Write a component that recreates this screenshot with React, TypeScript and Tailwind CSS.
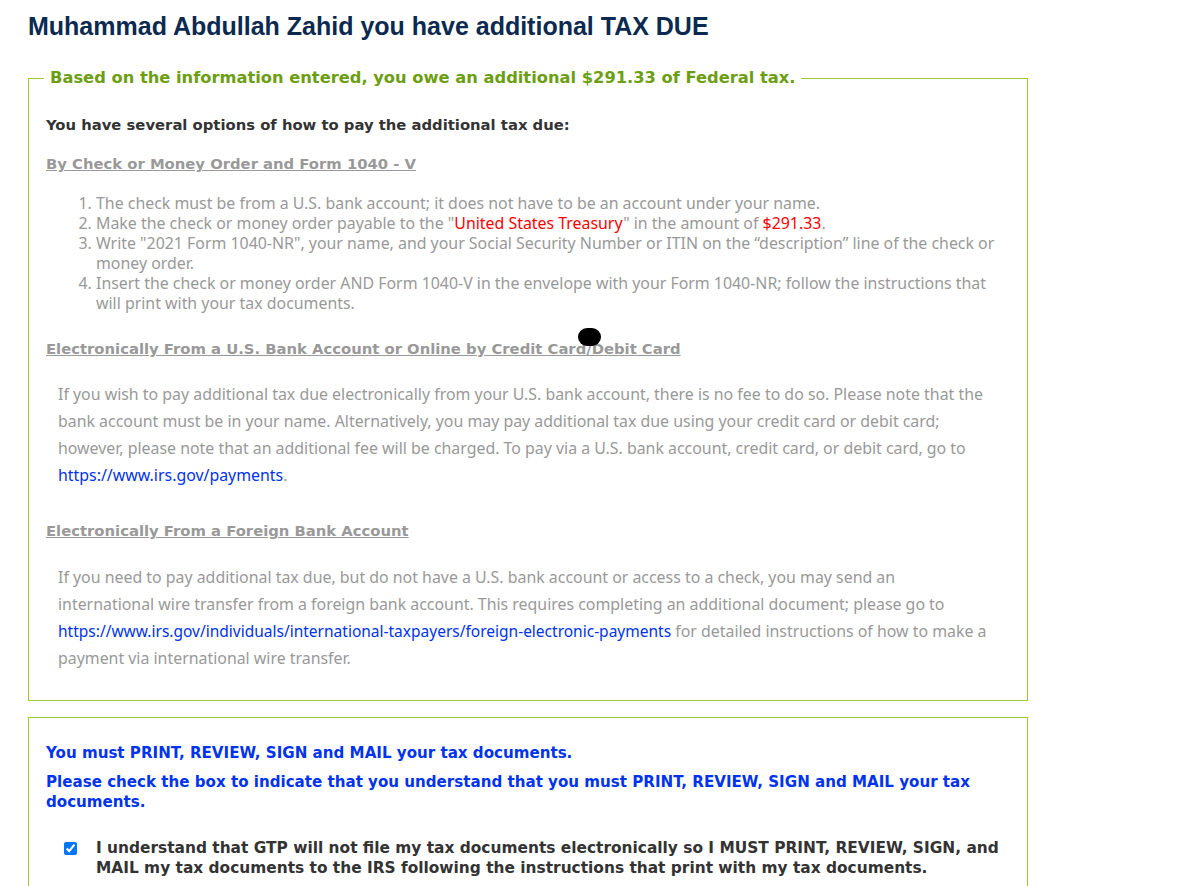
export default function App() {
  return (
    <div className="relative min-h-screen bg-white pl-[28px] pt-[12px] font-['Noto_Sans',sans-serif] text-[15.9px]">
      <h1 className="font-['Liberation_Sans',Arial,sans-serif] text-[25px] font-bold leading-[28px] text-[#0c2a50]">
        Muhammad Abdullah Zahid you have additional TAX DUE
      </h1>

      <fieldset className="mt-[28px] w-[1000px] border border-[#99cc33] px-[17px] pt-[27px] pb-[28px]">
        <legend className="ml-[-2px] px-[6px] font-['DejaVu_Sans',sans-serif] text-[16.3px] font-bold leading-[20px] text-[#6c9e12]">
          Based on the information entered, you owe an additional $291.33 of Federal tax.
        </legend>

        <p className="font-['DejaVu_Sans',sans-serif] text-[14.8px] font-bold leading-[20px] text-[#333333]">
          You have several options of how to pay the additional tax due:
        </p>

        <h3 className="mt-[19px] font-['DejaVu_Sans',sans-serif] text-[14.8px] font-bold leading-[20px] text-[#999999] underline">
          By Check or Money Order and Form 1040 - V
        </h3>
        <ol className="mt-[19px] list-decimal pl-[50px] leading-[20px] text-[#999999]">
          <li>The check must be from a U.S. bank account; it does not have to be an account under your name.</li>
          <li>
            Make the check or money order payable to the "<span className="text-[#ff0000]">United States Treasury</span>" in the amount of{" "}
            <span className="text-[#ff0000]">$291.33</span>.
          </li>
          <li>Write "2021 Form 1040-NR", your name, and your Social Security Number or ITIN on the “description” line of the check or money order.</li>
          <li>Insert the check or money order AND Form 1040-V in the envelope with your Form 1040-NR; follow the instructions that will print with your tax documents.</li>
        </ol>

        <h3 className="mt-[26px] font-['DejaVu_Sans',sans-serif] text-[14.8px] font-bold leading-[20px] text-[#999999] underline">
          Electronically From a U.S. Bank Account or Online by Credit Card/Debit Card
        </h3>
        <p className="mt-[22px] pl-[12px] pr-[21px] leading-[27px] text-[#999999]">
          If you wish to pay additional tax due electronically from your U.S. bank account, there is no fee to do so. Please note that the bank account must be in your name. Alternatively, you may pay additional tax due using your credit card or debit card; however, please note that an additional fee will be charged. To pay via a U.S. bank account, credit card, or debit card, go to{" "}
          <span className="text-[#0033ee]">https://www.irs.gov/payments</span>.
        </p>

        <h3 className="mt-[32px] font-['DejaVu_Sans',sans-serif] text-[14.8px] font-bold leading-[20px] text-[#999999] underline">
          Electronically From a Foreign Bank Account
        </h3>
        <p className="mt-[23px] pl-[12px] pr-[21px] leading-[27px] text-[#999999]">
          If you need to pay additional tax due, but do not have a U.S. bank account or access to a check, you may send an international wire transfer from a foreign bank account. This requires completing an additional document; please go to{" "}
          <span className="text-[15.5px] text-[#0033ee]">https://www.irs.gov/individuals/international-taxpayers/foreign-electronic-payments</span> for detailed instructions of how to make a payment via international wire transfer.
        </p>
      </fieldset>

      <div className="mt-[16px] w-[1000px] border border-[#99cc33] px-[17px] pt-[25px] pb-[20px] font-['DejaVu_Sans',sans-serif]">
        <p className="text-[15.1px] font-bold leading-[20px] text-[#0033ee]">You must PRINT, REVIEW, SIGN and MAIL your tax documents.</p>
        <p className="mt-[9px] text-[15.1px] font-bold leading-[20px] text-[#0033ee]">
          Please check the box to indicate that you understand that you must PRINT, REVIEW, SIGN and MAIL your tax documents.
        </p>
        <label className="mt-[26px] flex items-start pl-[18px]">
          <input type="checkbox" defaultChecked className="mt-[4px] h-[13px] w-[13px] shrink-0" />
          <span className="ml-[19px] text-[15.4px] font-bold leading-[20px] text-[#333333]">
            I understand that GTP will not file my tax documents electronically so I MUST PRINT, REVIEW, SIGN, and MAIL my tax documents to the IRS following the instructions that print with my tax documents.
          </span>
        </label>
      </div>

      {/* mouse cursor dot from the capture */}
      <div className="absolute left-[578px] top-[328px] h-[18px] w-[23px] rounded-full bg-black" />
    </div>
  );
}
